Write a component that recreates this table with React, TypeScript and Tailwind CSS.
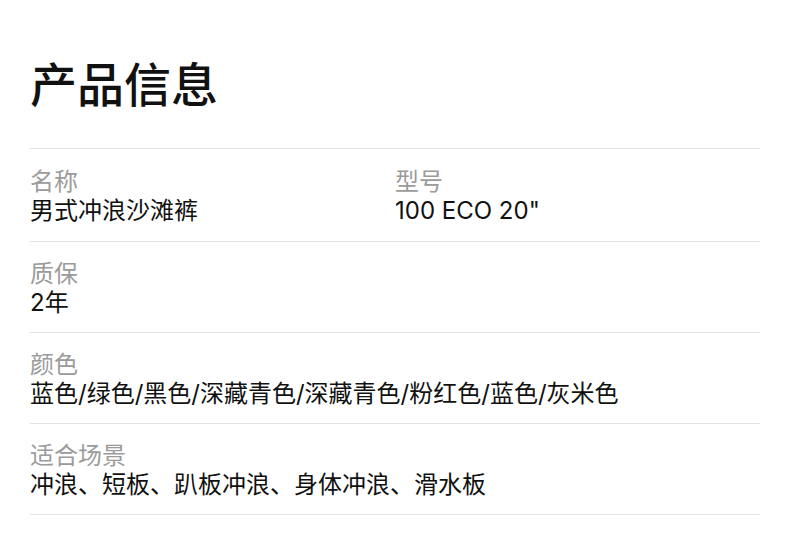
const font = {
  fontFamily: '"Inter", "Noto Sans CJK SC", sans-serif',
};

type Field = { label: string; value: string };

const rows: Field[][] = [
  [
    { label: "名称", value: "男式冲浪沙滩裤" },
    { label: "型号", value: '100 ECO 20"' },
  ],
  [{ label: "质保", value: "2年" }],
  [{ label: "颜色", value: "蓝色/绿色/黑色/深藏青色/深藏青色/粉红色/蓝色/灰米色" }],
  [{ label: "适合场景", value: "冲浪、短板、趴板冲浪、身体冲浪、滑水板" }],
];

function Item({ label, value, wide }: Field & { wide?: boolean }) {
  return (
    <div className={wide ? "col-span-2" : ""}>
      <div className="text-[24px] leading-[29px] text-[#9b9b9b]">{label}</div>
      <div className="text-[24px] leading-[29px] text-[#111] whitespace-nowrap">{value}</div>
    </div>
  );
}

export default function App() {
  return (
    <div className="w-[790px] h-[533px] bg-white px-[30px] pt-[57px]" style={font}>
      <h1 className="text-[47px] leading-[56px] font-medium text-[#111] mb-[35px]">产品信息</h1>
      <div className="border-b border-[#e3e3e3]">
        {rows.map((row, i) => (
          <div
            key={i}
            className={
              i === 0
                ? "grid grid-cols-2 border-t border-[#e3e3e3] pt-[18px] pb-[16px]"
                : "grid grid-cols-2 border-t border-[#e3e3e3] pt-[17px] pb-[15px]"
            }
          >
            {row.map((f) => (
              <Item key={f.label} {...f} wide={row.length === 1} />
            ))}
          </div>
        ))}
      </div>
    </div>
  );
}
